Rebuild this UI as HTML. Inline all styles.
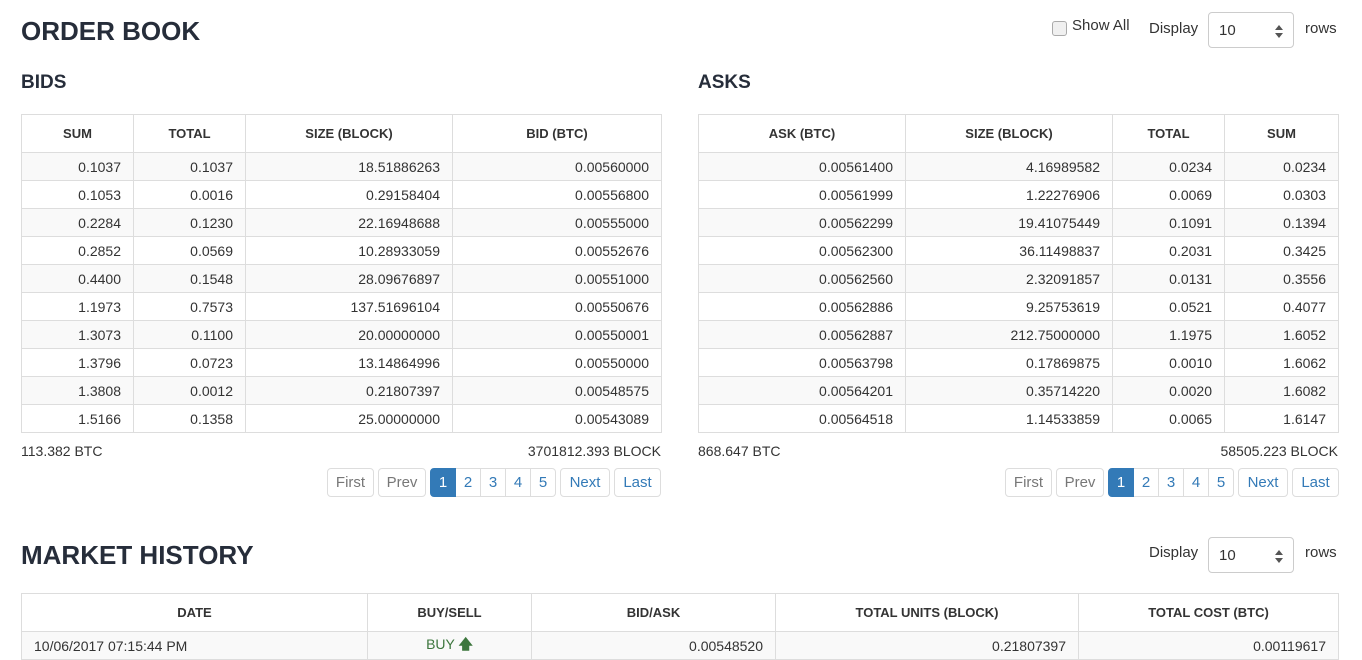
<!DOCTYPE html><html><head><style>
body{margin:0;width:1362px;height:649px;overflow:hidden;background:#fff;font-family:"Liberation Sans",sans-serif;color:#333;font-size:14px;position:relative}
.a{position:absolute}
h1{position:absolute;margin:0;font-size:26px;font-weight:bold;color:#262d3a;letter-spacing:0px}
h2{position:absolute;margin:0;font-size:19px;font-weight:bold;color:#262d3a}
table{position:absolute;border-collapse:collapse;font-size:14px}
td,th{border:1px solid #ddd;padding:0 12px;height:27px;text-align:right}
th{height:37px;text-align:center;font-size:13px;font-weight:bold;color:#333}
tr:nth-child(even) td{background:#f9f9f9}
.pg{position:absolute;top:468px;height:29px;display:flex}
.pg span{border:1px solid #ddd;height:27px;line-height:27px;text-align:center;color:#337ab7;font-size:15px;box-sizing:content-box}
.pg .d{color:#777}
.pg .c{background:#337ab7;color:#fff;border-color:#337ab7}
.sel{position:absolute;width:86px;height:36px;border:1px solid #ccc;border-radius:4px;font-size:15px;line-height:36px;padding-left:10px;box-sizing:border-box}
.sel:after{content:"";position:absolute;right:10px;top:12px;border:4px solid transparent;border-bottom:5px solid #555;border-top:0}
.sel:before{content:"";position:absolute;right:10px;top:20px;border:4px solid transparent;border-top:5px solid #555;border-bottom:0}
</style></head><body>
<h1 style="left:21px;top:16px">ORDER BOOK</h1>
<div class="a" style="left:1052px;top:21px;width:13px;height:13px;border:1px solid #aaa;border-radius:3px;background:#f0f0f0"></div>
<div class="a" style="left:1072px;top:17px;font-size:15px">Show All</div>
<div class="a" style="left:1149px;top:20px;font-size:15px">Display</div>
<div class="sel" style="left:1208px;top:12px">10</div>
<div class="a" style="left:1305px;top:20px;font-size:15px">rows</div>
<h2 style="left:21px;top:72px">BIDS</h2>
<h2 style="left:698px;top:72px">ASKS</h2>
<table style="left:21px;top:114px;width:641px">
<tr><th style="width:87px">SUM</th><th style="width:87px">TOTAL</th><th style="width:182px">SIZE (BLOCK)</th><th>BID (BTC)</th></tr>
<tr><td>0.1037</td><td>0.1037</td><td>18.51886263</td><td>0.00560000</td></tr>
<tr><td>0.1053</td><td>0.0016</td><td>0.29158404</td><td>0.00556800</td></tr>
<tr><td>0.2284</td><td>0.1230</td><td>22.16948688</td><td>0.00555000</td></tr>
<tr><td>0.2852</td><td>0.0569</td><td>10.28933059</td><td>0.00552676</td></tr>
<tr><td>0.4400</td><td>0.1548</td><td>28.09676897</td><td>0.00551000</td></tr>
<tr><td>1.1973</td><td>0.7573</td><td>137.51696104</td><td>0.00550676</td></tr>
<tr><td>1.3073</td><td>0.1100</td><td>20.00000000</td><td>0.00550001</td></tr>
<tr><td>1.3796</td><td>0.0723</td><td>13.14864996</td><td>0.00550000</td></tr>
<tr><td>1.3808</td><td>0.0012</td><td>0.21807397</td><td>0.00548575</td></tr>
<tr><td>1.5166</td><td>0.1358</td><td>25.00000000</td><td>0.00543089</td></tr>
</table>
<table style="left:698px;top:114px;width:641px">
<tr><th style="width:182px">ASK (BTC)</th><th style="width:182px">SIZE (BLOCK)</th><th style="width:87px">TOTAL</th><th>SUM</th></tr>
<tr><td>0.00561400</td><td>4.16989582</td><td>0.0234</td><td>0.0234</td></tr>
<tr><td>0.00561999</td><td>1.22276906</td><td>0.0069</td><td>0.0303</td></tr>
<tr><td>0.00562299</td><td>19.41075449</td><td>0.1091</td><td>0.1394</td></tr>
<tr><td>0.00562300</td><td>36.11498837</td><td>0.2031</td><td>0.3425</td></tr>
<tr><td>0.00562560</td><td>2.32091857</td><td>0.0131</td><td>0.3556</td></tr>
<tr><td>0.00562886</td><td>9.25753619</td><td>0.0521</td><td>0.4077</td></tr>
<tr><td>0.00562887</td><td>212.75000000</td><td>1.1975</td><td>1.6052</td></tr>
<tr><td>0.00563798</td><td>0.17869875</td><td>0.0010</td><td>1.6062</td></tr>
<tr><td>0.00564201</td><td>0.35714220</td><td>0.0020</td><td>1.6082</td></tr>
<tr><td>0.00564518</td><td>1.14533859</td><td>0.0065</td><td>1.6147</td></tr>
</table>
<div class="a" style="left:21px;top:443px">113.382 BTC</div>
<div class="a" style="right:701px;top:443px">3701812.393 BLOCK</div>
<div class="a" style="left:698px;top:443px">868.647 BTC</div>
<div class="a" style="right:24px;top:443px">58505.223 BLOCK</div>
<div class="pg" style="left:327px">
<span class="d" style="width:45px;border-radius:4px">First</span><span class="d" style="width:46px;margin-left:4px;border-radius:4px">Prev</span>
<span class="c" style="width:24px;margin-left:4px;border-radius:4px 0 0 4px">1</span><span style="width:24px;border-left:0">2</span><span style="width:24px;border-left:0">3</span><span style="width:24px;border-left:0">4</span><span style="width:24px;border-left:0;border-radius:0 4px 4px 0">5</span>
<span style="width:48px;margin-left:4px;border-radius:4px">Next</span><span style="width:45px;margin-left:4px;border-radius:4px">Last</span></div>
<div class="pg" style="left:1005px">
<span class="d" style="width:45px;border-radius:4px">First</span><span class="d" style="width:46px;margin-left:4px;border-radius:4px">Prev</span>
<span class="c" style="width:24px;margin-left:4px;border-radius:4px 0 0 4px">1</span><span style="width:24px;border-left:0">2</span><span style="width:24px;border-left:0">3</span><span style="width:24px;border-left:0">4</span><span style="width:24px;border-left:0;border-radius:0 4px 4px 0">5</span>
<span style="width:48px;margin-left:4px;border-radius:4px">Next</span><span style="width:45px;margin-left:4px;border-radius:4px">Last</span></div>
<h1 style="left:21px;top:540px">MARKET HISTORY</h1>
<div class="a" style="left:1149px;top:544px;font-size:15px">Display</div>
<div class="sel" style="left:1208px;top:537px">10</div>
<div class="a" style="left:1305px;top:544px;font-size:15px">rows</div>
<table style="left:21px;top:593px;width:1318px">
<tr><th style="width:321px">DATE</th><th style="width:139px">BUY/SELL</th><th style="width:219px">BID/ASK</th><th style="width:278px">TOTAL UNITS (BLOCK)</th><th>TOTAL COST (BTC)</th></tr>
<tr><td style="text-align:left;background:#f9f9f9">10/06/2017 07:15:44 PM</td><td style="text-align:center;color:#3c763d;background:#f9f9f9">BUY <span style="font-weight:bold">&#129093;</span></td><td style="background:#f9f9f9">0.00548520</td><td style="background:#f9f9f9">0.21807397</td><td style="background:#f9f9f9">0.00119617</td></tr>
</table>
</body></html>
